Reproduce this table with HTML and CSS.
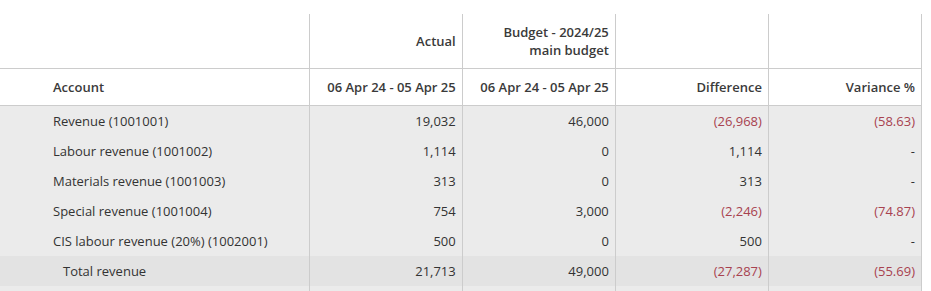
FILE: index.html
```html
<!DOCTYPE html>
<html>
<head>
<meta charset="utf-8">
<link rel="stylesheet" href="styles.css">
</head>
<body>
<table class="report">
  <colgroup>
    <col class="c-acc"><col class="c-num"><col class="c-num"><col class="c-num"><col class="c-num">
  </colgroup>
  <thead>
    <tr class="h1">
      <th></th>
      <th class="num">Actual</th>
      <th class="num">Budget - 2024/25<br>main budget</th>
      <th></th>
      <th></th>
    </tr>
    <tr class="h2">
      <th class="acc">Account</th>
      <th class="num">06 Apr 24 - 05 Apr 25</th>
      <th class="num">06 Apr 24 - 05 Apr 25</th>
      <th class="num">Difference</th>
      <th class="num">Variance %</th>
    </tr>
  </thead>
  <tbody>
    <tr><td class="acc">Revenue (1001001)</td><td class="num">19,032</td><td class="num">46,000</td><td class="num neg">(26,968)</td><td class="num neg">(58.63)</td></tr>
    <tr><td class="acc">Labour revenue (1001002)</td><td class="num">1,114</td><td class="num">0</td><td class="num">1,114</td><td class="num">-</td></tr>
    <tr><td class="acc">Materials revenue (1001003)</td><td class="num">313</td><td class="num">0</td><td class="num">313</td><td class="num">-</td></tr>
    <tr><td class="acc">Special revenue (1001004)</td><td class="num">754</td><td class="num">3,000</td><td class="num neg">(2,246)</td><td class="num neg">(74.87)</td></tr>
    <tr><td class="acc">CIS labour revenue (20%) (1002001)</td><td class="num">500</td><td class="num">0</td><td class="num">500</td><td class="num">-</td></tr>
    <tr class="total"><td class="acc">Total revenue</td><td class="num">21,713</td><td class="num">49,000</td><td class="num neg">(27,287)</td><td class="num neg">(55.69)</td></tr>
    <tr class="spacer"><td></td><td></td><td></td><td></td><td></td></tr>
  </tbody>
</table>
</body>
</html>
```
FILE: styles.css
```css
html, body {
  margin: 0;
  padding: 0;
  background: #fff;
}
body {
  padding-top: 14px;
  font-family: "Open Sans", "Liberation Sans", sans-serif;
  font-size: 13px;
  color: #333;
}
.report {
  border-collapse: collapse;
  table-layout: fixed;
  width: 922px;
}
.c-acc { width: 309px; }
.c-num { width: 153px; }
.report th, .report td {
  padding: 0 6px 0 0;
  border-right: 1px solid #ccc;
  font-weight: normal;
  white-space: nowrap;
  line-height: 18px;
}
.report .num { text-align: right; }
.report .acc { text-align: left; padding-left: 53px; }
.report thead th {
  font-weight: 600;
  color: #3a3a3a;
  border-bottom: 1px solid #ccc;
  vertical-align: middle;
}
.h1 th { height: 54px; }
.h2 th { height: 36px; }
tbody tr { background: #ebebeb; }
tbody td { height: 30px; vertical-align: middle; }
.report .neg { color: #a8424f; }
.report tr.total { background: #e3e3e3; }
.report tr.total .acc { padding-left: 63px; }
.report tr.spacer td { height: 5px; }
```
